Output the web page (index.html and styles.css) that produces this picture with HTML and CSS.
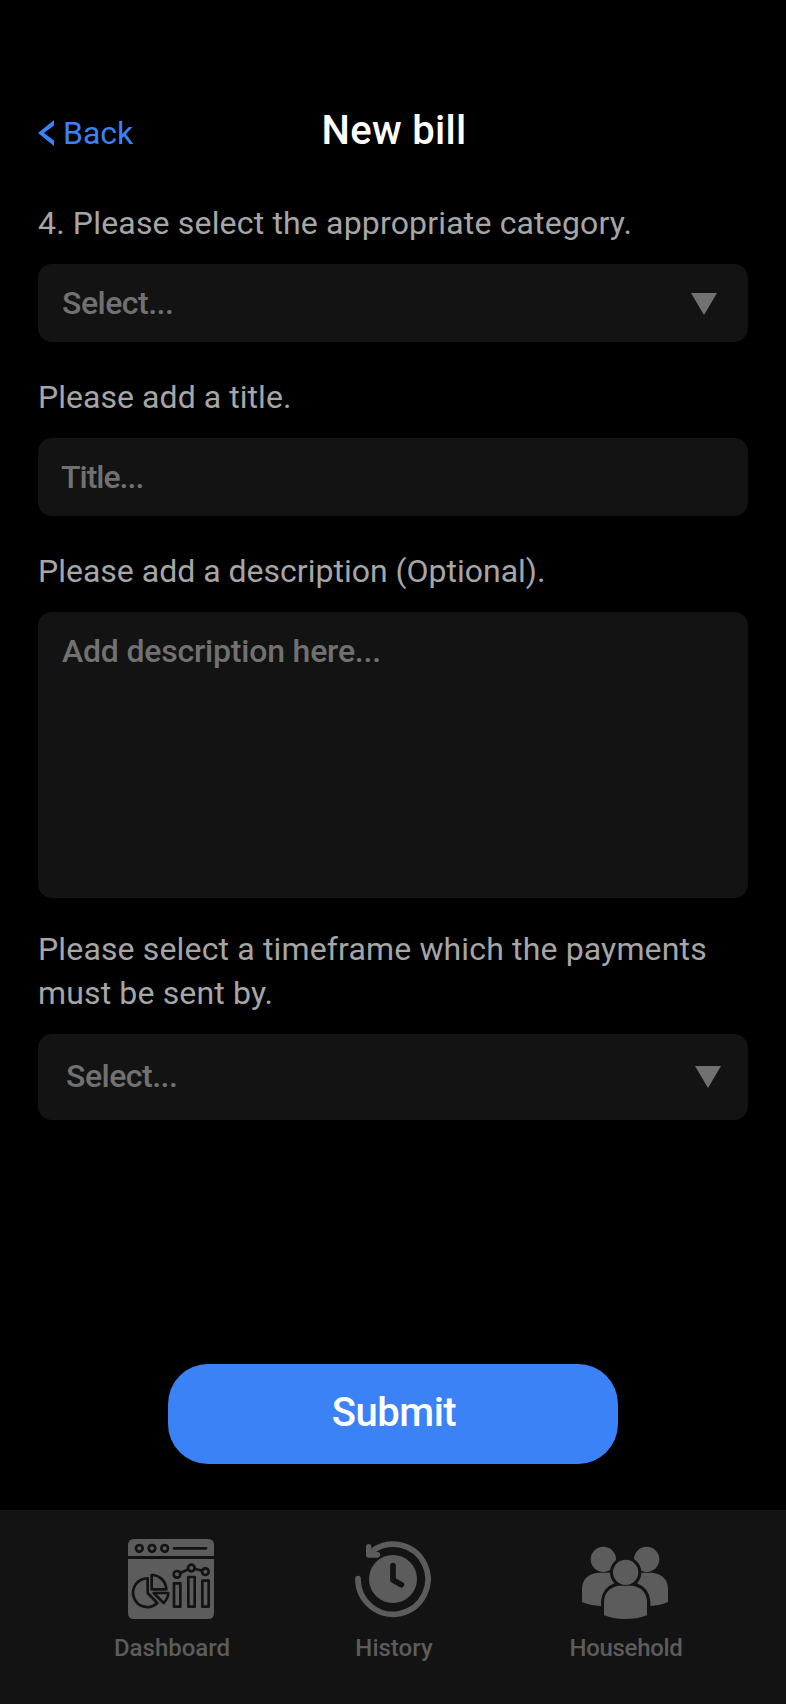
FILE: index.html
```html
<!DOCTYPE html>
<html lang="en">
<head>
  <meta charset="UTF-8">
  <meta name="viewport" content="width=device-width, initial-scale=1.0">
  <title>New bill</title>
  <link rel="stylesheet" href="styles.css">
</head>
<body>
  <header class="header">
    <a class="back" href="#">
      <svg class="back-icon" viewBox="0 0 16 26"><path d="M16 0 0 13 16 26V20.500L6 13 16 5.500Z"/></svg>
      <span>Back</span>
    </a>
    <h1 class="page-title">New bill</h1>
  </header>

  <form class="bill-form">
    <label class="label label-category">4. Please select the appropriate category.</label>
    <button type="button" class="field select">
      <span>Select...</span>
      <svg class="arrow" viewBox="0 0 26 22"><path d="M0 0H26L13 22Z"/></svg>
    </button>

    <label class="label" for="title">Please add a title.</label>
    <input class="field title-field" id="title" type="text" placeholder="Title...">

    <label class="label label-description" for="description">Please add a description (Optional).</label>
    <textarea class="field description" id="description" placeholder="Add description here..."></textarea>

    <label class="label label-timeframe">Please select a timeframe which the payments<br>must be sent by.</label>
    <button type="button" class="field select select-timeframe">
      <span>Select...</span>
      <svg class="arrow" viewBox="0 0 26 22"><path d="M0 0H26L13 22Z"/></svg>
    </button>

    <button type="button" class="submit">Submit</button>
  </form>

  <nav class="tabs">
    <a class="tab" href="#">
      <svg class="tab-icon" viewBox="84 117 258 243" width="86" height="81">
        <path class="fill" d="M102 117H324Q342 117 342 135V168H84V135Q84 117 102 117Z"/>
        <path class="fill" d="M84 177H342V339Q342 357 324 357H102Q84 357 84 339Z"/>
        <g class="line">
          <circle cx="118" cy="145" r="10"/>
          <circle cx="156" cy="145" r="10"/>
          <circle cx="194" cy="145" r="10"/>
          <path d="M222 145H318"/>
          <path d="M143 235A43 43 0 1 0 172 309L143 279Z"/>
          <path d="M155 225A44 44 0 0 1 199 268H155Z"/>
          <path d="M161 279H205Q204 296 191 309Z"/>
          <path d="M222 250H241V320H222ZM265 231H284V320H265ZM307 242H326V320H307Z"/>
          <path d="M241 219 264 208M284 206 307 212"/>
          <circle cx="231" cy="223" r="10"/>
          <circle cx="274" cy="204" r="10"/>
          <circle cx="316" cy="215" r="10"/>
        </g>
      </svg>
      <span>Dashboard</span>
    </a>
    <a class="tab" href="#">
      <svg class="tab-icon" viewBox="75 117 228 243" width="76" height="81">
        <path class="ring" d="M84 236A105 105 0 1 0 123 156"/>
        <path class="fill" d="M108 140A8 8 0 0 1 124 140V149L134 143 138 156H142A8.500 8.500 0 0 1 142 173H116Q108 173 108 165Z"/>
        <circle class="fill" cx="189" cy="237" r="72"/>
        <path class="hands" d="M189 197V240L214 254"/>
      </svg>
      <span>History</span>
    </a>
    <a class="tab" href="#">
      <svg class="tab-icon" viewBox="96 117 258 243" width="86" height="81">
        <g class="fill">
          <circle cx="160" cy="178" r="38"/>
          <circle cx="290" cy="178" r="38"/>
          <path d="M96 306V265Q98 224 143 218H200V318H153Q119 316 96 306Z"/>
          <path d="M354 306V265Q352 224 307 218H250V318H301Q331 316 354 306Z"/>
        </g>
        <path class="cut" d="M153 330V304Q156 264 193 250A47 47 0 1 1 261 250Q298 264 301 304V330Z"/>
        <circle class="fill" cx="227" cy="217" r="38"/>
        <path class="fill" d="M162 346V305Q164 264 207 257H247Q289 264 291 305V346Q265 357 227 357 189 357 162 346Z"/>
      </svg>
      <span class="household-text">Household</span>
    </a>
  </nav>
</body>
</html>
```

FILE: styles.css
```css
* {
  box-sizing: border-box;
}

body {
  margin: 0;
  min-height: 1704px;
  display: flex;
  flex-direction: column;
  background-color: #000;
  color: #a6a6a6;
  font-family: Roboto, "Liberation Sans", sans-serif;
  font-size: 32px;
  line-height: 44px;
}

a {
  color: inherit;
  text-decoration: none;
}

button,
input,
textarea {
  margin: 0;
  border: 0;
  font: inherit;
}

.header {
  display: grid;
  grid-template-columns: 1fr auto 1fr;
  align-items: end;
  padding: 107px 38px 0;
}

.back {
  display: flex;
  align-items: center;
  gap: 9px;
  color: #3b82f6;
}

.back-icon {
  width: 16px;
  height: 26px;
  fill: #3b82f6;
}

.page-title {
  margin: 0;
  padding-left: 2px;
  color: #fff;
  font-size: 40px;
  font-weight: 500;
  line-height: 48px;
  letter-spacing: 0.3px;
}

.bill-form {
  flex: 1;
  display: flex;
  flex-direction: column;
  padding: 0 38px;
}

.label {
  margin: 33px 0 19px;
  letter-spacing: 0.05px;
}

.label-category {
  margin-top: 46px;
  letter-spacing: 0.17px;
}

.label-description {
  letter-spacing: 0;
}

.label-timeframe {
  margin-top: 29px;
  letter-spacing: 0.15px;
}

.field {
  display: block;
  width: 100%;
  height: 78px;
  padding: 17px 24px;
  border-radius: 14px;
  background-color: #131313;
  color: #717171;
  font-weight: 500;
  letter-spacing: -0.5px;
  outline: none;
}

.field::placeholder {
  color: #717171;
  opacity: 1;
}

.select {
  display: flex;
  align-items: center;
  justify-content: space-between;
  padding-right: 31px;
}

.arrow {
  width: 26px;
  height: 22px;
  margin-top: 2px;
  fill: #717171;
}

.title-field {
  padding-left: 23px;
  letter-spacing: -1px;
}

.description {
  height: 286px;
  letter-spacing: -0.2px;
  resize: none;
}

.select-timeframe {
  height: 86px;
  padding: 16px 27px 18px 28px;
}

.submit {
  align-self: center;
  width: 450px;
  height: 100px;
  margin-top: 244px;
  padding: 0 0 2px 2px;
  border-radius: 40px;
  background-color: #3b82f6;
  color: #fff;
  font-size: 40px;
  font-weight: 500;
  letter-spacing: -0.5px;
}

.tabs {
  display: grid;
  grid-template-columns: 222px 222px 242px;
  height: 194px;
  padding: 29px 0 0 61px;
  background-color: #131313;
}

.tab {
  display: flex;
  flex-direction: column;
  align-items: center;
  gap: 14px;
  color: #5c5c5c;
  font-size: 24px;
  font-weight: 500;
  line-height: 28px;
}

.tab-icon {
  margin-right: 2px;
}

.household-text {
  letter-spacing: -0.3px;
}

.fill {
  fill: #5c5c5c;
}

.cut {
  fill: #131313;
}

.line {
  fill: none;
  stroke: #131313;
  stroke-width: 8;
  stroke-linecap: round;
  stroke-linejoin: round;
}

.ring {
  fill: none;
  stroke: #5c5c5c;
  stroke-width: 17;
  stroke-linecap: round;
}

.hands {
  fill: none;
  stroke: #131313;
  stroke-width: 17;
  stroke-linecap: round;
  stroke-linejoin: round;
}
```
